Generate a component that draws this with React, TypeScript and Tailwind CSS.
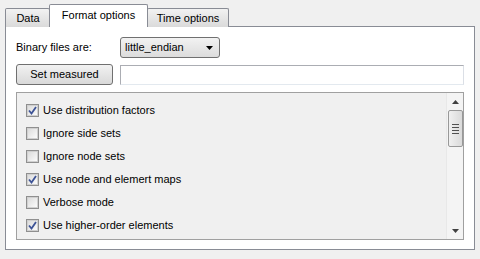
import React from 'react'

const options = [
  { label: 'Use distribution factors', checked: true },
  { label: 'Ignore side sets', checked: false },
  { label: 'Ignore node sets', checked: false },
  { label: 'Use node and elemert maps', checked: true },
  { label: 'Verbose mode', checked: false },
  { label: 'Use higher-order elements', checked: true },
]

function CheckBox({ checked }: { checked: boolean }) {
  return (
    <span className="flex h-[13px] w-[13px] shrink-0 items-center justify-center border border-[#8f8f8f] bg-white">
      <span className="flex h-[11px] w-[11px] items-center justify-center border border-[#d0d0d0] bg-gradient-to-br from-[#dcdcdc] to-[#fbfbfb]">
        {checked && (
          <svg width="9" height="9" viewBox="0 0 9 9">
            <path d="M1 4.5 L3.5 7.5 L8 1" fill="none" stroke="#3d5396" strokeWidth="1.8" />
          </svg>
        )}
      </span>
    </span>
  )
}

export default function App() {
  return (
    <div
      className="h-[259px] w-[480px] overflow-hidden bg-[#f0f0f0] pl-[5px] pt-[5px] text-[11px] text-black"
      style={{ fontFamily: '"Liberation Sans", Arial, sans-serif' }}
    >
      {/* tab bar */}
      <div className="relative z-10 flex h-[22px] items-end">
        <div className="flex h-[19px] w-[45px] items-center justify-center rounded-t-[2px] border border-b-0 border-[#898c95] bg-gradient-to-b from-[#f2f2f2] to-[#dadada] pl-[1px]">
          Data
        </div>
        <div className="-mx-[1px] flex h-[23px] w-[99px] items-center justify-center rounded-t-[2px] border border-b-0 border-[#898c95] bg-white pb-[2px]">
          Format options
        </div>
        <div className="flex h-[19px] w-[82px] items-center justify-center rounded-t-[2px] border border-b-0 border-[#898c95] bg-gradient-to-b from-[#f2f2f2] to-[#dadada]">
          Time options
        </div>
      </div>

      {/* tab page */}
      <div className="-mt-[1px] flex h-[224px] w-[470px] flex-col border border-[#898c95] bg-white px-[10px] pt-[10px]">
        <div className="flex h-[21px] items-center">
          <span className="w-[104px]">Binary files are:</span>
          <div className="flex h-[21px] w-[100px] items-center justify-between rounded-[3px] border border-[#707070] bg-gradient-to-b from-[#f2f2f2] to-[#dcdcdc] pl-[4px] pr-[6px]">
            <span>little_endian</span>
            <svg width="7" height="4" viewBox="0 0 7 4">
              <path d="M0 0 H7 L3.5 4 Z" fill="#000" />
            </svg>
          </div>
        </div>

        <div className="mt-[6px] flex h-[21px] items-center gap-[7px]">
          <button className="flex h-[21px] w-[97px] items-center justify-center rounded-[3px] border border-[#707070] bg-gradient-to-b from-[#f2f2f2] to-[#d9d9d9]">
            Set measured
          </button>
          <div className="h-[20px] flex-1 border border-[#abadb3] border-b-[#e3e9ef] border-r-[#dbdfe6] bg-white" />
        </div>

        <div className="mt-[7px] flex h-[148px] border border-[#a0a0a0] bg-[#f0f0f0]">
          <div className="flex flex-1 flex-col pl-[9px] pt-[6px]">
            {options.map((o) => (
              <div key={o.label} className="flex h-[23px] items-center gap-[4px]">
                <CheckBox checked={o.checked} />
                <span>{o.label}</span>
              </div>
            ))}
          </div>

          {/* scrollbar */}
          <div className="flex w-[17px] flex-col items-center border-l border-[#e8e8e8] bg-[#f4f4f4]">
            <div className="flex h-[17px] items-center justify-center">
              <svg width="7" height="4" viewBox="0 0 7 4">
                <path d="M0 4 H7 L3.5 0 Z" fill="#404040" />
              </svg>
            </div>
            <div className="flex h-[37px] w-[15px] flex-col items-center justify-center gap-[2px] rounded-[2px] border border-[#989898] bg-gradient-to-r from-[#f0f0f0] to-[#dadada]">
              <span className="h-px w-[7px] bg-[#505050]" />
              <span className="h-px w-[7px] bg-[#505050]" />
              <span className="h-px w-[7px] bg-[#505050]" />
              <span className="h-px w-[7px] bg-[#505050]" />
            </div>
            <div className="flex-1" />
            <div className="flex h-[17px] items-center justify-center">
              <svg width="7" height="4" viewBox="0 0 7 4">
                <path d="M0 0 H7 L3.5 4 Z" fill="#404040" />
              </svg>
            </div>
          </div>
        </div>
      </div>
    </div>
  )
}
